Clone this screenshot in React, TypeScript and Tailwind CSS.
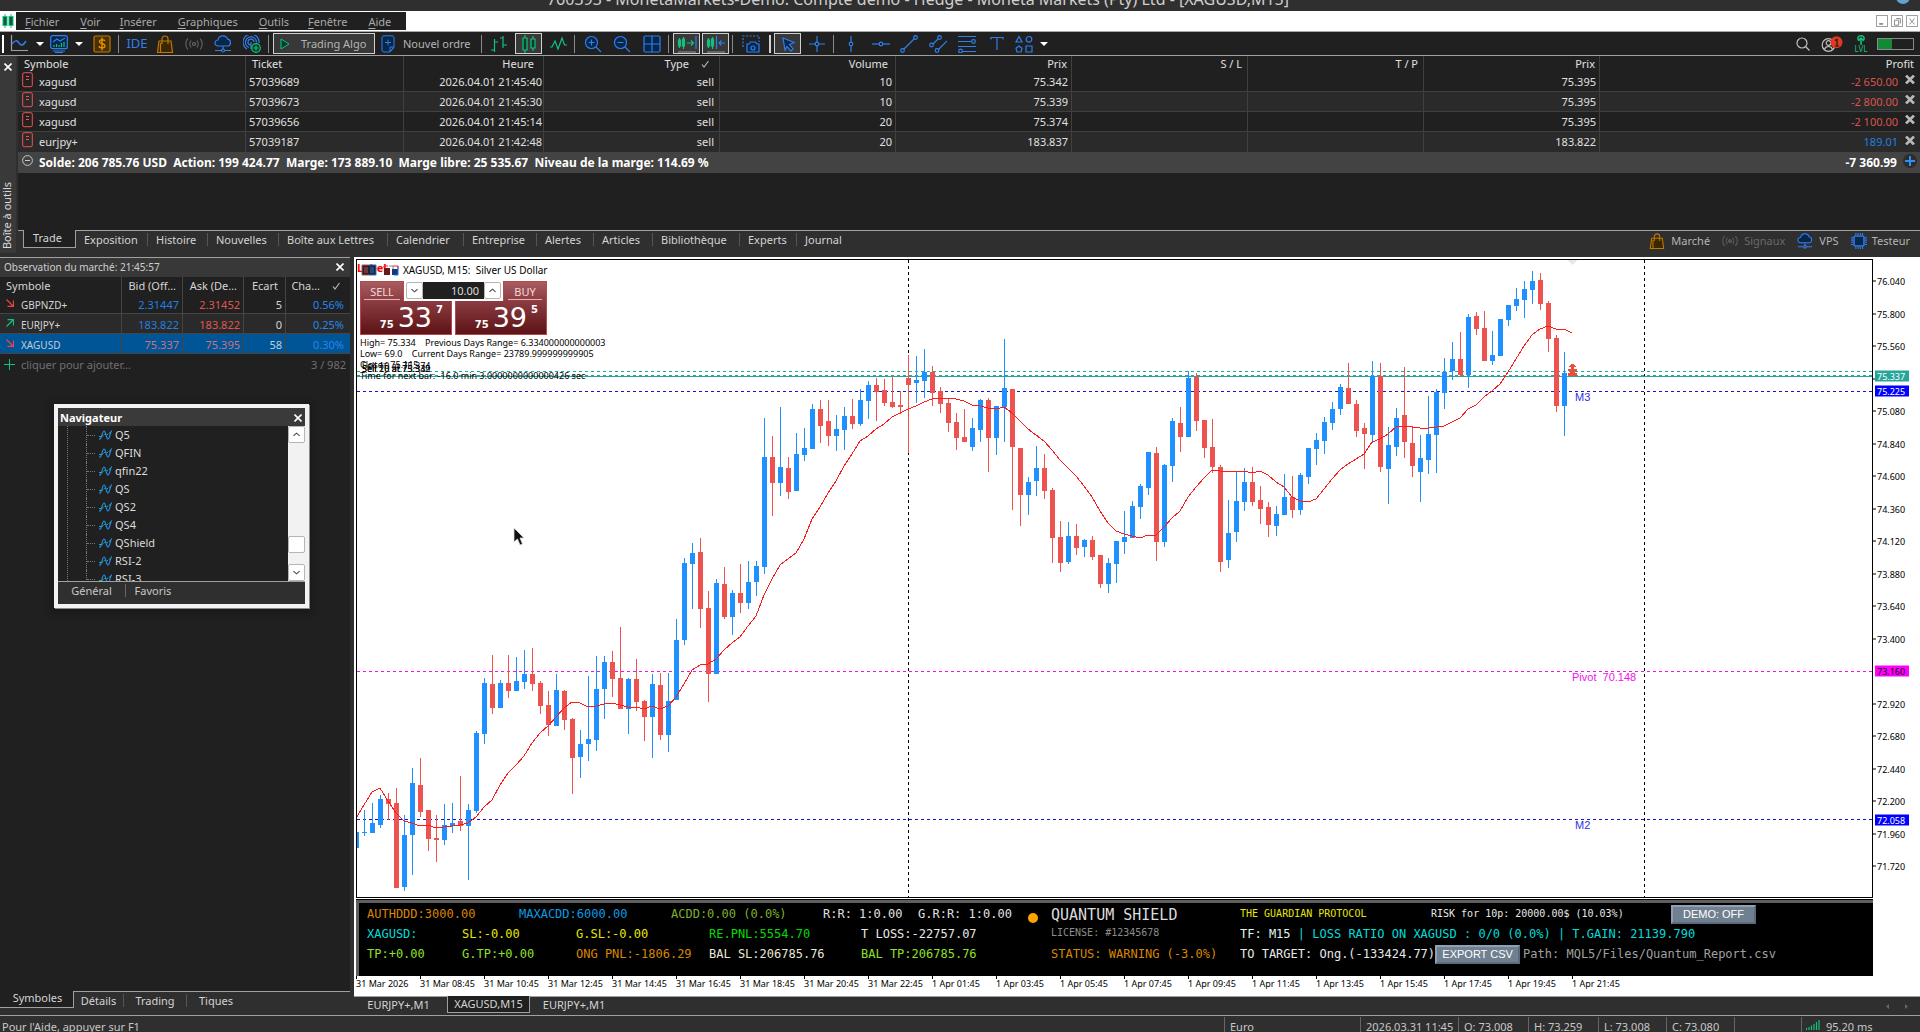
import React from "react";

const UI = "font-['Noto_Sans',sans-serif]";
const MONO = "font-['DejaVu_Sans_Mono',monospace]";

/* ------------------------------------------------------------------ */
/* Chart data                                                          */
/* ------------------------------------------------------------------ */

type Candle = [dir: "u" | "d", high: number, top: number, bottom: number, low: number];

const CANDLES: Candle[] = [
  ["u", 832, 832, 848, 848], ["u", 810, 832, 833, 836], ["u", 803, 823, 833, 833], ["u", 795, 799, 825, 828],
  ["d", 793, 799, 804, 820], ["d", 788, 803, 888, 888], ["u", 815, 835, 887, 891], ["u", 768, 783, 835, 875],
  ["d", 758, 785, 812, 817], ["d", 810, 810, 839, 851], ["d", 815, 838, 840, 862], ["u", 804, 825, 840, 845],
  ["u", 803, 823, 826, 833], ["d", 776, 821, 826, 831], ["u", 804, 810, 826, 880], ["u", 731, 733, 811, 813],
  ["u", 678, 683, 734, 744], ["d", 655, 684, 708, 714], ["u", 680, 683, 708, 708], ["d", 655, 683, 691, 698],
  ["u", 657, 681, 691, 691], ["u", 650, 674, 682, 689], ["d", 648, 674, 684, 691], ["d", 681, 683, 706, 714],
  ["d", 691, 705, 725, 736], ["u", 674, 690, 726, 726], ["d", 690, 691, 720, 730], ["d", 718, 719, 758, 794],
  ["u", 730, 744, 757, 778], ["u", 676, 739, 744, 761], ["u", 656, 689, 740, 751], ["u", 656, 662, 689, 719],
  ["d", 651, 662, 679, 697], ["d", 627, 678, 709, 709], ["u", 678, 679, 709, 734], ["d", 659, 679, 702, 711],
  ["d", 700, 701, 717, 741], ["u", 674, 684, 717, 758], ["d", 673, 685, 735, 740], ["u", 673, 701, 735, 752],
  ["u", 619, 640, 700, 700], ["u", 558, 563, 640, 645], ["u", 543, 553, 564, 609], ["d", 538, 552, 609, 628],
  ["d", 591, 608, 674, 702], ["u", 579, 583, 674, 674], ["d", 567, 584, 617, 619], ["u", 590, 593, 617, 635],
  ["d", 564, 593, 603, 613], ["u", 561, 582, 603, 609], ["u", 561, 566, 582, 596], ["u", 418, 457, 567, 574],
  ["d", 436, 457, 483, 516], ["u", 407, 467, 483, 496], ["d", 457, 468, 492, 499], ["u", 433, 454, 491, 491],
  ["u", 428, 448, 455, 461], ["u", 404, 409, 449, 449], ["d", 400, 409, 426, 443], ["d", 400, 421, 436, 446],
  ["u", 415, 429, 436, 451], ["u", 407, 416, 430, 450], ["d", 399, 416, 424, 429], ["u", 389, 400, 424, 426],
  ["u", 381, 385, 401, 419], ["d", 378, 385, 392, 421], ["d", 379, 390, 403, 406], ["d", 376, 402, 407, 408],
  ["d", 391, 405, 407, 414], ["d", 355, 378, 385, 453], ["u", 356, 380, 383, 403], ["u", 349, 372, 381, 398],
  ["d", 366, 372, 393, 406], ["d", 387, 391, 404, 413], ["d", 398, 403, 423, 432], ["d", 413, 422, 438, 450],
  ["d", 409, 437, 442, 442], ["u", 418, 428, 447, 451], ["u", 399, 400, 430, 442], ["d", 398, 400, 438, 472],
  ["u", 406, 406, 438, 455], ["u", 339, 388, 407, 442], ["d", 389, 389, 447, 510], ["d", 448, 448, 495, 526],
  ["u", 477, 482, 495, 515], ["u", 446, 468, 481, 496], ["d", 454, 468, 491, 499], ["d", 488, 490, 538, 563],
  ["d", 521, 537, 563, 572], ["u", 522, 536, 562, 564], ["d", 524, 536, 548, 555], ["u", 539, 540, 547, 557],
  ["d", 536, 540, 557, 560], ["d", 555, 555, 584, 588], ["u", 558, 563, 584, 593], ["u", 541, 541, 564, 583],
  ["u", 511, 537, 542, 554], ["u", 501, 506, 538, 538], ["u", 484, 486, 507, 519], ["u", 452, 452, 488, 495],
  ["d", 447, 453, 542, 561], ["u", 464, 465, 542, 547], ["u", 418, 421, 466, 482], ["d", 407, 423, 437, 452],
  ["u", 371, 378, 437, 437], ["d", 373, 377, 421, 431], ["d", 420, 420, 448, 458], ["d", 419, 447, 467, 473],
  ["d", 465, 467, 562, 572], ["u", 500, 533, 560, 568], ["u", 472, 501, 532, 542], ["u", 468, 482, 502, 511],
  ["d", 467, 482, 502, 506], ["d", 486, 500, 509, 524], ["d", 502, 507, 525, 537], ["u", 506, 514, 526, 536],
  ["u", 474, 497, 515, 515], ["d", 476, 497, 510, 518], ["u", 473, 475, 510, 515], ["u", 448, 448, 477, 484],
  ["u", 433, 440, 449, 465], ["u", 417, 422, 441, 454], ["u", 402, 409, 423, 430], ["u", 384, 387, 409, 415],
  ["d", 363, 388, 404, 404], ["d", 400, 404, 431, 437], ["d", 423, 428, 434, 469], ["u", 361, 376, 435, 443],
  ["d", 363, 376, 467, 472], ["u", 427, 445, 469, 504], ["u", 408, 418, 447, 456], ["d", 367, 415, 442, 458],
  ["d", 426, 443, 466, 477], ["u", 435, 458, 472, 502], ["u", 396, 434, 460, 474], ["u", 389, 392, 435, 473],
  ["u", 358, 372, 393, 409], ["u", 342, 359, 371, 380], ["d", 332, 359, 375, 377], ["u", 314, 317, 375, 388],
  ["d", 312, 316, 329, 335], ["d", 311, 328, 361, 361], ["u", 331, 355, 361, 365], ["u", 319, 319, 356, 356],
  ["u", 305, 305, 320, 326], ["u", 288, 299, 306, 311], ["u", 281, 289, 300, 318], ["u", 271, 281, 290, 304],
  ["d", 273, 280, 304, 310], ["d", 301, 303, 339, 352], ["d", 335, 338, 406, 412], ["u", 352, 373, 406, 436],
];

const AVERAGE = [
  818, 805, 792, 788, 801, 813, 821, 823, 826, 825, 828, 827, 826, 825, 823, 817, 807, 800, 785, 773, 765, 756, 743,
  733, 726, 717, 708, 702, 703, 707, 706, 704, 703, 705, 707, 707, 709, 706, 709, 706, 697, 684, 670, 665, 664, 659,
  650, 643, 637, 626, 616, 595, 579, 565, 559, 553, 539, 519, 507, 493, 481, 466, 454, 441, 436, 429, 424, 417, 413,
  409, 406, 402, 399, 398, 398, 399, 401, 405, 406, 408, 409, 407, 413, 421, 429, 435, 441, 450, 460, 468, 476, 486,
  497, 511, 523, 531, 534, 536, 538, 535, 535, 527, 518, 511, 497, 487, 478, 470, 471, 471, 471, 471, 473, 471, 475,
  482, 487, 497, 501, 502, 499, 489, 479, 470, 464, 459, 454, 442, 439, 434, 427, 426, 427, 428, 428, 427, 426, 422,
  418, 409, 405, 397, 391, 384, 372, 359, 346, 335, 329, 326, 329, 329, 333,
];

const X0 = 356;
const STEP = 8;
const VIEW = { x: 357, y: 260, w: 1515, h: 637 };
const pctX = (x: number) => `${((x - VIEW.x) / VIEW.w) * 100}%`;
const pctY = (y: number) => `${((y - VIEW.y) / VIEW.h) * 100}%`;
const priceY = (p: number) => 282 + (76.04 - p) * 135;

const TICKS = [
  76.04, 75.8, 75.56, 75.32, 75.08, 74.84, 74.6, 74.36, 74.12, 73.88, 73.64, 73.4, 73.16, 72.92, 72.68, 72.44, 72.2,
  71.96, 71.72,
];

const TIMES = [
  "31 Mar 2026", "31 Mar 08:45", "31 Mar 10:45", "31 Mar 12:45", "31 Mar 14:45", "31 Mar 16:45", "31 Mar 18:45",
  "31 Mar 20:45", "31 Mar 22:45", "1 Apr 01:45", "1 Apr 03:45", "1 Apr 05:45", "1 Apr 07:45", "1 Apr 09:45",
  "1 Apr 11:45", "1 Apr 13:45", "1 Apr 15:45", "1 Apr 17:45", "1 Apr 19:45", "1 Apr 21:45",
];

/* ------------------------------------------------------------------ */
/* Icons                                                               */
/* ------------------------------------------------------------------ */

const BLUE = "#2f7fed";
const NAVY = "#06264a";
const GREEN = "#10c27c";
const ORANGE = "#c27800";

function Ico({ className = "h-[18px] w-[18px]", box = "0 0 18 18", children }: { className?: string; box?: string; children: React.ReactNode }) {
  return (
    <svg className={`shrink-0 ${className}`} viewBox={box} fill="none" strokeWidth="1.2" aria-hidden="true">
      {children}
    </svg>
  );
}

const Bag = ({ className }: { className?: string }) => (
  <Ico className={className}>
    <path d="M3 6h12l1.500 11.500h-15z" fill="#3a2600" stroke={ORANGE} />
    <path d="M6 9V4a3 3 0 0 1 6 0v5M4.500 17V8" stroke={ORANGE} />
  </Ico>
);
const Signal = ({ className }: { className?: string }) => (
  <Ico className={className}>
    <circle cx="9" cy="9" r="1.500" stroke="#6a6a6a" />
    <path d="M6.200 5.500a5 5 0 0 0 0 7M11.800 5.500a5 5 0 0 1 0 7M3 3.500a8 8 0 0 0 0 11M15 3.500a8 8 0 0 1 0 11" stroke="#5c5c5c" />
  </Ico>
);
const Cloud = ({ className }: { className?: string }) => (
  <Ico className={className}>
    <path d="M4 11a3 3 0 0 1 0-6 5 5 0 0 1 9.600-.8A3.500 3.500 0 0 1 14 11z" fill={NAVY} stroke={BLUE} />
    <path d="M9 11v4M1 15.500h6M11 15.500h6" stroke={BLUE} />
    <circle cx="9" cy="15.500" r="1.500" stroke={BLUE} />
  </Ico>
);
const Chip = ({ className }: { className?: string }) => (
  <Ico className={className}>
    <rect x="3.500" y="3.500" width="11" height="11" rx="1" fill={NAVY} stroke={BLUE} strokeWidth="1.500" />
    <path d="M5.500 0v3M8 0v3M10.500 0v3M13 0v3M5.500 15v3M8 15v3M10.500 15v3M13 15v3M0 5.500h3M0 8h3M0 10.500h3M0 13h3M15 5.500h3M15 8h3M15 10.500h3M15 13h3" stroke={BLUE} />
  </Ico>
);
const Close = ({ className = "h-2 w-2" }: { className?: string }) => (
  <svg className={className} viewBox="0 0 8 8" stroke="#fff" strokeWidth="1.600" aria-hidden="true">
    <path d="M.5.5l7 7M7.500.5l-7 7" />
  </svg>
);
const Check = () => (
  <svg className="h-2 w-2" viewBox="0 0 8 8" fill="none" stroke="#b5b5b5" strokeWidth="1.200" aria-hidden="true">
    <path d="M1 4.500l2 2.500L7.500 1" />
  </svg>
);
const Chevron = ({ up = false }: { up?: boolean }) => (
  <svg className="h-[7px] w-[7px]" viewBox="0 0 8 8" fill="none" stroke="#444" strokeWidth="1.200" aria-hidden="true">
    <path d={up ? "M.5 5.500L4 2.500l3.500 3" : "M.5 2.500L4 5.500l3.500-3"} />
  </svg>
);
const Ring = ({ x, y }: { x: number; y: number }) => <circle cx={x} cy={y} r="1.800" fill="#1f1f1f" stroke={BLUE} />;

/* ------------------------------------------------------------------ */
/* Title, menu and toolbar                                             */
/* ------------------------------------------------------------------ */

const MENUS: [string, string][] = [
  ["Fichier", "ml-[9px]"], ["Voir", "ml-[21px]"], ["Insérer", "ml-[19px]"], ["Graphiques", "ml-[21px]"],
  ["Outils", "ml-[21px]"], ["Fenêtre", "ml-[19px]"], ["Aide", "ml-[21px]"],
];

function TopBars() {
  return (
    <>
      <header className="relative flex h-[11px] shrink-0 items-end justify-center overflow-hidden bg-[#2f2f2f]">
        <h1 className="pr-[84px] pb-1 text-[16px] leading-[16px] whitespace-pre text-[#cfcfcf]">
          760393 - MonetaMarkets-Demo: Compte demo - Hedge - Moneta Markets (Pty) Ltd - [XAGUSD,M15]
        </h1>
        <span className="absolute -top-2.5 right-2.5 h-3.5 w-3.5 rounded-full bg-[#5fa3d0]" />
      </header>
      <div className="flex h-[21px] shrink-0 items-center border-b border-[#a8a8a8] bg-white">
        <svg className="mr-0.5 ml-0.5 h-3.5 w-3" viewBox="0 0 12 14" aria-hidden="true">
          <path d="M3 0v14M9 0v14" stroke={GREEN} />
          <rect x="1" y="2.500" width="4" height="9" fill="#0c5c3c" stroke={GREEN} />
          <rect x="7" y="2.500" width="4" height="9" fill="#0c5c3c" stroke={GREEN} />
        </svg>
        <nav className="flex h-[18px] w-[390px] items-center bg-[#202020]">
          {MENUS.map(([m, gap]) => (
            <button key={m} className={`${gap} pt-0.5 leading-[14px] text-[#a9a9a9]`}>
              <span className="underline underline-offset-2">{m[0]}</span>
              {m.slice(1)}
            </button>
          ))}
        </nav>
        <div className="ml-auto flex gap-[3px] pr-0.5">
          {["M3 9h4v1H3z", "M3 5h5v6H3zM5 3h5v6", "M3 3l6 7M9 3l-6 7"].map((d, i) => (
            <button key={d} aria-label={["Réduire", "Restaurer", "Fermer"][i]} className="h-3 w-3 border border-[#a0a0a0]">
              <svg viewBox="0 0 12 13" fill="none" stroke="#8c8c8c" strokeWidth="1.200" aria-hidden="true">
                <path d={d} />
              </svg>
            </button>
          ))}
        </div>
      </div>
    </>
  );
}

const Sep = ({ className }: { className: string }) => <span className={`h-[18px] w-px shrink-0 bg-[#8a8a8a] ${className}`} />;
const Caret = ({ className }: { className: string }) => (
  <svg className={`h-1 w-2 shrink-0 ${className}`} viewBox="0 0 8 4" aria-hidden="true">
    <path d="M0 0h8L4 4z" fill="#fff" />
  </svg>
);
function Tool({ label, className, on = false, children }: { label: string; className: string; on?: boolean; children: React.ReactNode }) {
  return (
    <button
      aria-label={label}
      aria-pressed={on}
      className={`flex shrink-0 items-center justify-center ${on ? "h-[21px] border border-[#cfcfcf] bg-[#383838]" : "h-[18px]"} ${className}`}
    >
      {children}
    </button>
  );
}

function Toolbar() {
  return (
    <div className="flex h-6 shrink-0 items-center border-b border-[#a0a0a0] bg-[#202020] text-[#b4b4b4]">
      <span className="ml-0.5 h-[18px] w-0.5 shrink-0 bg-white" />
      <Tool label="Type de graphique" className="ml-[6px] w-[18px]">
        <Ico>
          <path d="M1.500 0v15.500H18" stroke="#a0a0a0" />
          <path d="M2 9c3-4 5-4 7-1s4 3 7-2" stroke={BLUE} strokeWidth="1.500" />
        </Ico>
      </Tool>
      <Caret className="ml-2" />
      <Tool label="Indicateurs" className="ml-[5px] w-[19px]">
        <Ico>
          <rect x=".7" y=".7" width="16.600" height="13" rx="2" fill={NAVY} stroke={BLUE} />
          <path d="M3 16h12M5 17.700h8" stroke={BLUE} />
          <path d="M3 7l4-3 3 2 5-3" stroke={BLUE} />
          <path d="M4 12v-2M6.500 12V9M9 12v-2M11.500 12V8M14 12V7" stroke={GREEN} />
        </Ico>
      </Tool>
      <Caret className="ml-[7px]" />
      <Tool label="Symbole" className="ml-[10px] w-[18px]">
        <Ico>
          <rect x="1" y="1" width="16" height="16" rx="1.500" fill="#4a3000" stroke={ORANGE} />
          <path d="M12 6c-.5-1.500-5.500-2-5.500.7 0 2.500 5.500 1.500 5.500 4.200 0 2.800-5.500 2.300-6 .4M9 2.500v13" stroke="#e09000" strokeWidth="1.400" />
        </Ico>
      </Tool>
      <Sep className="ml-[7px]" />
      <Tool label="IDE" className="ml-[8px] w-5"><span className="text-[13px] leading-none text-[#2f7fed]">IDE</span></Tool>
      <Tool label="Marché" className="ml-[9px] w-[18px]"><Bag /></Tool>
      <Tool label="Signaux" className="ml-[11px] w-[18px]"><Signal /></Tool>
      <Tool label="VPS" className="ml-[11px] w-[18px]"><Cloud /></Tool>
      <Tool label="Connexion" className="ml-[11px] w-[18px]">
        <Ico>
          <path d="M4 14A8 8 0 1 1 16 8M6 12.500a5.500 5.500 0 1 1 7.500-5M7.500 10a3 3 0 1 1 3.500-3M8 7v7" stroke={BLUE} />
          <circle cx="13" cy="13" r="4.300" fill="#0b3a28" stroke={GREEN} />
          <path d="M10.500 13h5M13 10.500v5" stroke={GREEN} />
        </Ico>
      </Tool>
      <Sep className="ml-[7px]" />
      <button className="ml-1 flex h-[21px] w-[102px] shrink-0 items-center border border-[#cfcfcf] bg-[#383838] pl-[6px]">
        <svg className="mr-[11px] h-3 w-2.5" viewBox="0 0 10 12" aria-hidden="true">
          <path d="M1 1l8 5-8 5z" fill="#0b3a28" stroke={GREEN} />
        </svg>
        Trading Algo
      </button>
      <button className="ml-[6px] flex w-[90px] shrink-0 items-center gap-2 whitespace-nowrap">
        <svg className="h-[18px] w-3.5 shrink-0" viewBox="0 0 14 18" fill="none" stroke={BLUE} aria-hidden="true">
          <path d="M3 .8h8a2 2 0 0 1 2 2V12l-4 5H3a2 2 0 0 1-2-2V2.800a2 2 0 0 1 2-2zM13 12l-4 5v-5z" fill={NAVY} />
          <path d="M7 4.500v6M4 7.500h6" />
        </svg>
        Nouvel ordre
      </button>
      <Sep className="ml-[10px]" />
      <Tool label="Barres" className="ml-2 w-[18px]">
        <Ico><path d="M4.500 4v13M1 15h3.500M4.500 7H8M13 1v12M10 3h3M13 10h4" stroke={GREEN} /></Ico>
      </Tool>
      <Tool on label="Chandeliers" className="ml-[7px] w-[27px]">
        <Ico>
          <path d="M5 0v3M5 15v3M13 1v3M13 13v3" stroke={GREEN} />
          <path d="M3 3h4v12H3zM11 4h4v9h-4z" fill="#0b3a28" stroke={GREEN} />
        </Ico>
      </Tool>
      <Tool label="Ligne" className="ml-[7px] w-[18px]">
        <Ico><path d="M1 12h2l3-6 3 8 4-11 2.500 7H18" stroke={GREEN} /></Ico>
      </Tool>
      <Sep className="ml-[7px]" />
      {["Zoom avant", "Zoom arrière"].map((l, i) => (
        <Tool key={l} label={l} className={i ? "ml-[11px] w-[18px]" : "ml-[9px] w-[18px]"}>
          <Ico>
            <circle cx="7.500" cy="7.500" r="6" fill={NAVY} stroke={BLUE} />
            <path d={i ? "M4.500 7.500h6M12 12l5 5" : "M4.500 7.500h6M7.500 4.500v6M12 12l5 5"} stroke={BLUE} />
          </Ico>
        </Tool>
      ))}
      <Tool label="Mosaïque" className="ml-3 w-[18px]">
        <Ico>
          <rect x="1" y="1" width="16" height="16" rx="1.500" fill={NAVY} stroke={BLUE} />
          <path d="M9 1v16M1 9h16" stroke={BLUE} />
        </Ico>
      </Tool>
      <Sep className="ml-[7px]" />
      <Tool on label="Défilement automatique" className="ml-1 w-[27px]">
        <Ico className="h-[18px] w-5" box="0 0 20 18">
          <path d="M2.500 3v10M6.500 2v12M1.500 5h2v6h-2zM5.500 4h2v7h-2zM10 8h6M14 5.500L16.500 8 14 10.500" stroke={GREEN} />
          <path d="M19 1v13" stroke={BLUE} />
          <path d="M1 17h18" stroke="#8a8a8a" />
        </Ico>
      </Tool>
      <Tool on label="Décalage du graphique" className="ml-0.5 w-[27px]">
        <Ico className="h-[18px] w-5" box="0 0 20 18">
          <path d="M2.500 3v10M6.500 2v12M1.500 5h2v6h-2zM5.500 4h2v7h-2z" stroke={GREEN} />
          <path d="M10.500 1v13M13 8h6M15.500 5.500L13 8l2.500 2.500" stroke={BLUE} />
          <path d="M1 17h18" stroke="#8a8a8a" />
        </Ico>
      </Tool>
      <Sep className="ml-[3px]" />
      <Tool label="Capture d'écran" className="ml-[9px] w-[18px]">
        <Ico>
          <path d="M1 12V1h16v6" stroke={BLUE} strokeDasharray="2 1.500" />
          <path d="M5 9h2l1.500-2h5L15 9h2v8H5z" fill={NAVY} stroke={BLUE} />
          <circle cx="11" cy="13" r="2" stroke={BLUE} />
        </Ico>
      </Tool>
      <span className="ml-[9px] h-[18px] w-0.5 shrink-0 bg-[#d0d0d0]" />
      <Tool on label="Curseur" className="ml-[3px] w-[27px]">
        <Ico><path d="M4 3l11 4.500-4.500 2L14 14l-2 2-4-4.500L6 15z" fill={NAVY} stroke={BLUE} /></Ico>
      </Tool>
      <Tool label="Réticule" className="ml-[7px] w-[18px]">
        <Ico><path d="M9 1v16M1 9h16" stroke={BLUE} /><Ring x={9} y={9} /></Ico>
      </Tool>
      <Sep className="ml-[7px]" />
      <Tool label="Ligne verticale" className="ml-2 w-[18px]">
        <Ico><path d="M9 1v16" stroke={BLUE} /><Ring x={9} y={9} /></Ico>
      </Tool>
      <Tool label="Ligne horizontale" className="ml-3 w-[18px]">
        <Ico><path d="M0 9h18" stroke={BLUE} /><Ring x={9} y={9} /></Ico>
      </Tool>
      <Tool label="Ligne de tendance" className="ml-[10px] w-[18px]">
        <Ico><path d="M2 16L16 2" stroke={BLUE} /><Ring x={2.500} y={15.500} /><Ring x={15.500} y={2.500} /></Ico>
      </Tool>
      <Tool label="Canal" className="ml-[11px] w-[18px]">
        <Ico><path d="M2 11l8-8M8 16l10-10" stroke={BLUE} /><Ring x={2.500} y={10} /><Ring x={10.500} y={2.500} /><Ring x={8} y={15.500} /></Ico>
      </Tool>
      <Tool label="Fibonacci" className="ml-[11px] w-[18px]">
        <Ico><path d="M0 1.500h18M0 6.500h14M0 11.500h18M4 16.500h14" stroke={BLUE} /><Ring x={15.500} y={6.500} /><Ring x={2.500} y={16} /></Ico>
      </Tool>
      <Tool label="Texte" className="ml-[12px] w-[18px]">
        <Ico><path d="M3 4.500V2.500h12v2M9 2.500V15" stroke={BLUE} /></Ico>
      </Tool>
      <Tool label="Formes" className="ml-[9px] w-[18px]">
        <Ico>
          <path d="M4 1.500L7 7H1zM11 11h6v6h-6zM4 11l3 2.300L6 17H2L1 13.300z" stroke={BLUE} />
          <circle cx="14" cy="4.300" r="2.800" stroke={BLUE} />
        </Ico>
      </Tool>
      <Caret className="ml-[7px]" />
      <div className="ml-auto flex items-center pr-[6px]">
        <Tool label="Rechercher" className="w-3.5">
          <Ico className="h-3.5 w-3.5" box="0 0 14 14"><circle cx="6" cy="6" r="5" stroke="#c0c0c0" /><path d="M9.500 9.500l4 4" stroke="#c0c0c0" /></Ico>
        </Tool>
        <Tool label="Compte" className="ml-[11px] w-[22px]">
          <Ico className="h-4 w-[22px]" box="0 0 22 16">
            <circle cx="7.500" cy="9" r="6.300" stroke="#c0c0c0" />
            <circle cx="7.500" cy="7" r="2.300" stroke="#c0c0c0" />
            <path d="M3.500 13.500c1-4 7-4 8 0" stroke="#c0c0c0" />
            <circle cx="15.500" cy="6.300" r="6" fill="#e03a1e" />
            <path d="M14 4.500l2-1.200V10M14 10h4" stroke="#1a1a1a" />
          </Ico>
        </Tool>
        <span className="ml-[10px] flex w-4 flex-col items-center text-[8px] leading-[8px] text-[#10c27c]">
          <svg className="h-2.5 w-2" viewBox="0 0 8 10" fill="none" stroke={GREEN} strokeWidth="1.500" aria-hidden="true">
            <path d="M2.500 6C-.5 4 1 .7 4 .7S8.500 4 5.500 6M4 10V3.500M2 5l2-2 2 2" />
          </svg>
          LVL
        </span>
        <span className="ml-2 h-3 w-[37px] border border-[#8a8a8a]"><span className="block h-full w-3.5 bg-[#128a35]" /></span>
      </div>
    </div>
  );
}

/* ------------------------------------------------------------------ */
/* Toolbox                                                             */
/* ------------------------------------------------------------------ */

const TRADES = [
  ["xagusd", "57039689", "2026.04.01 21:45:40", "10", "75.342", "75.395", "-2 650.00"],
  ["xagusd", "57039673", "2026.04.01 21:45:30", "10", "75.339", "75.395", "-2 800.00"],
  ["xagusd", "57039656", "2026.04.01 21:45:14", "20", "75.374", "75.395", "-2 100.00"],
  ["eurjpy+", "57039187", "2026.04.01 21:42:48", "20", "183.837", "183.822", "189.01"],
];

const TOOL_TABS: [string, string][] = [
  ["Exposition", "w-[72px]"], ["Histoire", "w-[60px]"], ["Nouvelles", "w-[71px]"], ["Boîte aux Lettres", "w-[109px]"],
  ["Calendrier", "w-[76px]"], ["Entreprise", "w-[73px]"], ["Alertes", "w-[57px]"], ["Articles", "w-[59px]"],
  ["Bibliothèque", "w-[87px]"], ["Experts", "w-[57px]"], ["Journal", "w-[60px]"],
];

function Toolbox() {
  const line = "border-r border-[#404040]";
  return (
    <section className="flex h-[201px] shrink-0 bg-[#2f2f2f]">
      <div className="flex h-[197px] w-4 shrink-0 flex-col items-center justify-between bg-[#393939] pt-[7px] pb-1 text-[#dcdcdc]">
        <button aria-label="Fermer"><Close /></button>
        <span className="mr-[3px] rotate-180 leading-[14px] whitespace-nowrap [writing-mode:vertical-rl]">Boîte à outils</span>
      </div>
      <div className="ml-0.5 flex min-w-0 flex-1 flex-col">
        <div className="flex h-[175px] flex-col border-b border-[#a0a0a0] bg-[#202020]">
          <table className="w-full table-fixed border-separate border-spacing-0 text-right text-[#e0e0e0]">
            <colgroup>
              <col className="w-[228px]" /><col className="w-[158px]" /><col className="w-[140px]" />
              <col className="w-[176px]" /><col className="w-[176px]" /><col className="w-[176px]" />
              <col className="w-[176px]" /><col className="w-[176px]" /><col className="w-[176px]" /><col />
            </colgroup>
            <thead>
              <tr className="leading-[16px] *:font-normal">
                <th className={`pl-[6px] text-left ${line}`}>Symbole</th>
                <th className={`pl-[6px] text-left ${line}`}>Ticket</th>
                <th className={`pr-[9px] ${line}`}>Heure</th>
                <th className={`pr-[10px] ${line}`}><span className="inline-flex items-center gap-3">Type<Check /></span></th>
                <th className={`pr-[7px] ${line}`}>Volume</th>
                <th className={`pr-1 ${line}`}>Prix</th>
                <th className={`pr-[5px] ${line}`}>S / L</th>
                <th className={`pr-[5px] ${line}`}>T / P</th>
                <th className={`pr-1 ${line}`}>Prix</th>
                <th className="pr-[6px]">Profit</th>
              </tr>
            </thead>
            <tbody>
              {TRADES.map((t, i) => (
                <tr key={t[1]} className={`leading-[16px] ${i % 2 ? "bg-[#2a2a2a]" : "bg-[#202020]"} ${i < 3 ? "*:border-b *:border-b-[#404040]" : ""} *:h-5 *:py-0`}>
                  <td className={`pl-1 text-left ${line}`}>
                    <span className="flex items-center gap-[6px]">
                      <svg className="-mt-1 h-4 w-[11px]" viewBox="0 0 11 16" fill="none" stroke="#ef5350" aria-hidden="true">
                        <rect x=".7" y=".7" width="9.600" height="14" rx="1.500" /><path d="M4 4.500h3M4 7.500h3" />
                      </svg>
                      {t[0]}
                    </span>
                  </td>
                  <td className={`pl-[3px] text-left ${line}`}>{t[1]}</td>
                  <td className={`pr-px ${line}`}>{t[2]}</td>
                  <td className={`pr-[5px] ${line}`}>sell</td>
                  <td className={`pr-[3px] ${line}`}>{t[3]}</td>
                  <td className={`pr-[3px] ${line}`}>{t[4]}</td>
                  <td className={line} />
                  <td className={line} />
                  <td className={`pr-[3px] ${line}`}>{t[5]}</td>
                  <td className="pr-[5px]">
                    <span className="flex items-center justify-end gap-[7px]">
                      <span className={t[6][0] === "-" ? "text-[#d9534f]" : "text-[#2080e0]"}>{t[6]}</span>
                      <button aria-label={`Clôturer ${t[1]}`}>
                        <svg className="-mt-1 h-[9px] w-2.5" viewBox="0 0 8 8" stroke="#b9b9b9" strokeWidth="2.400" aria-hidden="true"><path d="M.5.5l7 7M7.500.5l-7 7" /></svg>
                      </button>
                    </span>
                  </td>
                </tr>
              ))}
            </tbody>
          </table>
          <div className="flex h-[21px] items-center justify-between bg-[#434343] pr-[3px] pl-1 font-bold text-white">
            <span className="flex items-center gap-[6px] text-[12px] whitespace-pre">
              <svg className="-mt-1 h-[11px] w-[11px]" viewBox="0 0 11 11" fill="none" stroke="#c8c8c8" aria-hidden="true"><circle cx="5.500" cy="5.500" r="4.900" /><path d="M3 5.500h5" /></svg>
              {"Solde: 206 785.76 USD  Action: 199 424.77  Marge: 173 889.10  Marge libre: 25 535.67  Niveau de la marge: 114.69 %"}
            </span>
            <span className="flex items-center gap-[6px] text-[12px]">
              -7 360.99
              <button aria-label="Ajouter" className="-mt-1 rounded-full bg-[#2c2c2c]">
                <svg className="h-3.5 w-3.5" viewBox="0 0 14 14" stroke="#2f8ff5" strokeWidth="2" aria-hidden="true"><path d="M7 2v10M2 7h10" /></svg>
              </button>
            </span>
          </div>
        </div>
        <div className="flex h-[22px] items-start justify-between text-[#d4d4d4]">
          <div className="flex">
            <button className="-mt-px ml-[5px] h-[18px] w-[53px] border border-t-0 border-[#a0a0a0] bg-[#202020] pr-1 pb-0.5">Trade</button>
            {TOOL_TABS.map(([t, w]) => (
              <button key={t} className={`mt-0.5 h-[13px] whitespace-nowrap pl-[8px] text-left leading-[12px] ${w} ${t === "Journal" ? "" : "border-r border-[#555]"}`}>
                {t}
              </button>
            ))}
          </div>
          <div className="mt-[2px] flex gap-3 pr-[10px] text-[#b4b4b4]">
            <button className="flex items-center gap-[6px]"><Bag className="h-4 w-4" />Marché</button>
            <button className="flex items-center gap-[6px] text-[#6a6a6a]"><Signal className="h-4 w-4" />Signaux</button>
            <button className="flex items-center gap-[6px]"><Cloud className="h-4 w-4" />VPS</button>
            <button className="flex items-center gap-[5px]"><Chip className="h-4 w-4" />Testeur</button>
          </div>
        </div>
      </div>
    </section>
  );
}

/* ------------------------------------------------------------------ */
/* Market watch and navigator                                          */
/* ------------------------------------------------------------------ */

const QUOTES = [
  { up: false, s: "GBPNZD+", bid: "2.31447", ask: "2.31452", e: "5", c: "0.56%" },
  { up: true, s: "EURJPY+", bid: "183.822", ask: "183.822", e: "0", c: "0.25%" },
  { up: false, s: "XAGUSD", bid: "75.337", ask: "75.395", e: "58", c: "0.30%" },
];

function MarketWatch() {
  const line = "border-r border-[#454545]";
  return (
    <aside className="relative flex w-[350px] shrink-0 flex-col border-t border-[#a0a0a0] bg-[#202020] text-[#d4d4d4]">
      <div className="flex h-[19px] items-center justify-between bg-[#383838] pr-[6px] pb-px pl-1">
        <h2 className="text-[10px] text-[#cfcfcf]">Observation du marché: 21:45:57</h2>
        <button aria-label="Fermer"><Close /></button>
      </div>
      <table className="w-full table-fixed border-separate border-spacing-0 text-right">
        <colgroup><col className="w-[122px]" /><col className="w-[61px]" /><col className="w-[61px]" /><col className="w-[42px]" /><col /></colgroup>
        <thead>
          <tr className="h-[17px] leading-[17px] *:font-normal">
            <th className={`pl-[6px] text-left ${line}`}>Symbole</th>
            <th className={`pr-[6px] whitespace-nowrap ${line}`}>Bid (Off…</th>
            <th className={`pr-[6px] whitespace-nowrap ${line}`}>Ask (De…</th>
            <th className={`pr-[7px] ${line}`}>Ecart</th>
            <th className="pr-[10px]"><span className="inline-flex items-center gap-3">Cha…<Check /></span></th>
          </tr>
        </thead>
        <tbody>
          {QUOTES.map((q, i) => {
            const sel = i === 2;
            return (
              <tr key={q.s} className={`leading-[16px] *:h-5 *:border-b *:border-b-[#454545] *:pt-[3px] ${sel ? "bg-[#005596] text-[#c0cdd8]" : i ? "bg-[#2a2a2a]" : ""}`}>
                <td className={`pl-[6px] text-left ${line}`}>
                  <span className="flex items-center gap-[7px] text-[10px]">
                    <svg className="-mt-1 h-2 w-2" viewBox="0 0 8 8" fill="none" stroke={q.up ? GREEN : "#ef4444"} strokeWidth="1.200" aria-hidden="true">
                      <path d={q.up ? "M.5 7.500l7-7M1.500.6h6v6" : "M.5.5l7 7M1.500 7.400h6v-6"} />
                    </svg>
                    {q.s}
                  </span>
                </td>
                <td className={`pr-[3px] ${line} ${sel ? "text-[#d27078]" : "text-[#2080e0]"}`}>{q.bid}</td>
                <td className={`pr-[3px] ${line} ${sel ? "text-[#d27078]" : "text-[#e05550]"}`}>{q.ask}</td>
                <td className={`pr-[3px] ${line}`}>{q.e}</td>
                <td className="pr-[6px] text-[#2388ee]">{q.c}</td>
              </tr>
            );
          })}
        </tbody>
      </table>
      <div className="flex h-[22px] items-center justify-between pr-1 pl-1 text-[#707070]">
        <button className="flex items-center gap-[6px]">
          <svg className="-mt-0.5 h-[11px] w-[11px]" viewBox="0 0 11 11" stroke={GREEN} aria-hidden="true"><path d="M5.500 0v11M0 5.500h11" /></svg>
          cliquer pour ajouter...
        </button>
        <span>3 / 982</span>
      </div>
      <Navigator />
      <div className="mt-auto flex h-6 border-t border-[#a0a0a0] bg-[#2f2f2f] text-[#d4d4d4]">
        <button className="-mt-px h-[17px] w-[74px] border-r border-b border-[#a0a0a0] bg-[#202020] pb-0.5 pl-0.5">Symboles</button>
        <button className="mt-0.5 h-[13px] w-[50px] border-r border-[#555] leading-[12px]">Détails</button>
        <button className="mt-0.5 h-[13px] w-[63px] border-r border-[#555] leading-[12px]">Trading</button>
        <button className="mt-0.5 h-[13px] w-[58px] leading-[12px]">Tiques</button>
      </div>
    </aside>
  );
}

const NAV_ITEMS = ["Q5", "QFIN", "qfin22", "QS", "QS2", "QS4", "QShield", "RSI-2", "RSI-3"];

function Navigator() {
  const knob = "flex h-[17px] w-[17px] items-center justify-center rounded-[2px] border border-[#b5b5b5] bg-white";
  return (
    <section className="absolute top-[146px] left-[54px] flex h-[204px] w-[255px] flex-col border-4 border-[#f2f2f2] bg-[#2f2f2f] shadow-[1px_1px_0_#8a8a8a,0_2px_6px_3px_#181818]">
      <div className="flex h-[18px] shrink-0 items-center justify-between bg-[#3a3a3a] pt-px pr-[3px] pl-0.5 font-bold text-white">
        <h2>Navigateur</h2>
        <button aria-label="Fermer"><Close /></button>
      </div>
      <div className="flex min-h-0 flex-1 bg-[#202020]">
        <ul className="ml-[9px] flex-1 overflow-hidden border-l border-dotted border-[#777]">
          {NAV_ITEMS.map((n) => (
            <li key={n} className="ml-[18px] flex h-[18px] items-center border-l border-dotted border-[#777] text-[#dcdcdc]">
              <span className="mr-1 w-2 border-t border-dotted border-[#777]" />
              <svg className="mr-[3px] h-3 w-[13px]" viewBox="0 0 13 12" fill="none" aria-hidden="true">
                <path d="M0 10C3 11 3 2 5 2s2 8 4 8 2-8 4-8.500" stroke={BLUE} strokeWidth="1.200" />
                <path d="M0 7.500h3L6 5l2 1 2-2h3" stroke={GREEN} strokeWidth="1" strokeDasharray="2 1" />
              </svg>
              {n}
            </li>
          ))}
        </ul>
        <div className="flex w-[17px] flex-col bg-[#f2f2f2]">
          <button aria-label="Défiler vers le haut" className={knob}><Chevron up /></button>
          <span className={`mt-auto mb-[11px] ${knob}`} />
          <button aria-label="Défiler vers le bas" className={knob}><Chevron /></button>
        </div>
      </div>
      <div className="flex h-[23px] shrink-0 items-start border-t border-[#a0a0a0] pt-0.5 text-[#c8c8c8]">
        <button className="h-[13px] w-[68px] border-r border-[#666] leading-[12px]">Général</button>
        <button className="h-[13px] w-[54px] leading-[12px]">Favoris</button>
      </div>
    </section>
  );
}

/* ------------------------------------------------------------------ */
/* Chart window                                                        */
/* ------------------------------------------------------------------ */

function Plot() {
  return (
    <svg
      className="block h-full w-full"
      viewBox={`${VIEW.x} ${VIEW.y} ${VIEW.w} ${VIEW.h}`}
      preserveAspectRatio="none"
      shapeRendering="crispEdges"
      role="img"
      aria-label="XAGUSD, M15"
    >
      <g strokeWidth="1" strokeDasharray="3 3">
        <path d="M357 371.500H1873M357 375.500H1873" stroke="#26a69a" />
        <path d="M357 391.500H1873M357 819.500H1873" stroke="#1414d8" />
        <path d="M357 671.500H1873" stroke="#f012f0" />
        <path d="M908.500 260V897M1644.500 260V897" stroke="#000" />
      </g>
      <path d="M357 376.500H1873" stroke="#26a69a" />
      {CANDLES.map(([dir, high, top, bottom, low], i) => {
        const x = X0 + i * STEP;
        return (
          <g key={i} fill={dir === "u" ? "#1e90ff" : "#ef5350"}>
            <rect x={x} y={high} width="1" height={low - high} />
            <rect x={x - 2} y={top} width="5" height={bottom - top} />
          </g>
        );
      })}
      <polyline points={AVERAGE.map((y, i) => `${X0 + i * STEP},${y}`).join(" ")} fill="none" stroke="#ff1a1a" />
      <path d="M1572.500 363.500l4 3.500h-2.500v2h3v1.500h-2v2l2 .5v3h-9v-3l2-.5v-2h-2v-1.500h3v-2h-2.500z" fill="#e8503a" />
      <path d="M1568 260h9l-4.500 5z" fill="#ece4ee" />
    </svg>
  );
}

function QuickTrade() {
  const half = "flex h-[34px] items-end justify-end gap-1 border border-t-0 border-[#b4484c] bg-linear-to-b from-[#8c3c42] to-[#5c1216] pr-2 pb-1 text-white";
  const head = "flex h-5 w-11 items-center justify-center border border-b-0 border-[#b4484c] bg-linear-to-b from-[#a85c60] to-[#8c3c42] pt-0.5 text-[#f4d8d8]";
  const knob = "flex h-full w-[17px] items-center justify-center rounded-[2px] border border-[#b5b5b5] bg-white";
  return (
    <div className="ml-[3px] w-[187px]">
      <div className="flex items-start justify-between">
        <button className={head}><span className="border-b border-[#e8b0b0] px-[6px]">SELL</span></button>
        <div className="mt-px flex h-[17px] items-center">
          <button aria-label="Diminuer le volume" className={knob}><Chevron /></button>
          <input aria-label="Volume" defaultValue="10.00" className="h-full w-[61px] bg-[#202020] pr-[5px] text-right text-[11px] text-[#dcdcdc]" />
          <button aria-label="Augmenter le volume" className={knob}><Chevron up /></button>
        </div>
        <button className={head}><span className="border-b border-[#e8b0b0] px-[6px]">BUY</span></button>
      </div>
      <div className="flex justify-between font-['DejaVu_Sans',sans-serif]">
        {[["75", "33", "7"], ["75", "39", "5"]].map(([a, b, c]) => (
          <button key={b} className={`${half} w-[92px]`} aria-label={`${a}.${b}${c}`}>
            <span className="text-[10px] leading-none font-bold">{a}</span>
            <span className="text-[27px] leading-[24px]">{b}</span>
            <span className="self-start pt-1 text-[10px] leading-none font-bold">{c}</span>
          </button>
        ))}
      </div>
    </div>
  );
}

function ChartOverlay() {
  return (
    <div className="absolute top-0 left-0 flex flex-col whitespace-pre text-black">
      <div className="relative flex h-[21px] items-center pb-px pl-1 text-[10px]">
        <span className="absolute top-[1px] left-0 text-[11px] leading-[13px] font-bold text-[#ff0000]">Label</span>
        <svg className="relative h-3 w-4" viewBox="0 0 16 12" aria-hidden="true">
          <path d="M1 1h14v10H1z" fill="#1c2430" />
          <path d="M8 1H1v10h7M3 4h4M3 6h4M3 8h4" stroke="#c84a40" fill="none" />
          <path d="M8 1h7v10H8M9 4h4M9 6h4M9 8h4" stroke="#2a6fd8" fill="none" />
        </svg>
        <svg className="relative ml-1.5 h-3 w-4" viewBox="0 0 16 12" aria-hidden="true">
          <path d="M1 4h6v7H1z" fill="#6a1a1a" /><path d="M9 5h6v6H9z" fill="#123a78" />
          <path d="M1 4V2h4M15 5V2h-5" stroke="#ff2020" fill="none" /><path d="M6 2h4v3" stroke="#888" fill="none" />
          <path d="M15 2v9h-4" stroke="#2a6fd8" fill="none" />
        </svg>
        <span className="ml-1">XAGUSD, M15:  Silver US Dollar</span>
      </div>
      <QuickTrade />
      <div className="mt-[2px] ml-[3px] text-[9px] leading-[11px]">
        <p>{"High= 75.334    Previous Days Range= 6.334000000000003"}</p>
        <p>{"Low= 69.0    Current Days Range= 23789.999999999905"}</p>
        <div className="grid h-[15px] leading-[11px] *:col-start-1 *:row-start-1">
          <p>Close= 75.115</p>
          <p className="pt-px pl-0.5">Sell 10 at 75.374</p>
          <p className="pt-1 pl-0.5">Sell 10 at 75.342</p>
          <p className="pt-1 pl-0.5">Sell 20 at 75.339</p>
        </div>
        <p className="-mt-1 leading-[11px]">Time for next bar: -16.0 min 3.0000000000000426 sec</p>
      </div>
    </div>
  );
}

const PRICE_TAGS: [string, number, string][] = [
  ["75.337", 376.5, "bg-[#26a69a] text-white"],
  ["75.225", 391.5, "bg-[#0000ff] text-white"],
  ["73.160", 671, "bg-[#ff00ff] text-black"],
  ["72.058", 819.5, "bg-[#0000ff] text-white"],
];

function PriceScale() {
  return (
    <div className="relative w-[47px] shrink-0 text-[9px] leading-[11px] text-black">
      {TICKS.filter((t) => t !== 73.16).map((t) => (
        <div key={t} className="absolute left-0 flex -translate-y-1/2 items-center" style={{ top: pctY(priceY(t)) }}>
          <span className="h-px w-[3px] bg-black" />
          <span className="ml-px">{t === 75.32 ? "" : t.toFixed(3)}</span>
        </div>
      ))}
      {PRICE_TAGS.map(([t, y, c]) => (
        <span key={t} className={`absolute left-0.5 w-[34px] -translate-y-1/2 pl-0.5 ${c}`} style={{ top: pctY(y) }}>
          {t}
        </span>
      ))}
    </div>
  );
}

type Cell = [text: string, width: string, color: string];
const STATS: Cell[][] = [
  [
    ["AUTHDDD:3000.00", "w-[152px]", "text-[#d98600]"], ["MAXACDD:6000.00", "w-[152px]", "text-[#0a9be0]"],
    ["ACDD:0.00 (0.0%)", "w-[152px]", "text-[#7fae2a]"], ["R:R: 1:0.00", "w-[95px]", "text-[#e0e0e0]"],
    ["G.R:R: 1:0.00", "w-[110px]", "text-[#e0e0e0]"],
  ],
  [
    ["XAGUSD:", "w-[95px]", "text-[#00dcdc]"], ["SL:-0.00", "w-[114px]", "text-[#e6e600]"],
    ["G.SL:-0.00", "w-[133px]", "text-[#e6e600]"], ["RE.PNL:5554.70", "w-[152px]", "text-[#00dc00]"],
    ["T LOSS:-22757.07", "w-[160px]", "text-[#e8e8e8]"],
  ],
  [
    ["TP:+0.00", "w-[95px]", "text-[#8fe02a]"], ["G.TP:+0.00", "w-[114px]", "text-[#8fe02a]"],
    ["ONG PNL:-1806.29", "w-[133px]", "text-[#d98600]"], ["BAL SL:206785.76", "w-[152px]", "text-[#e8e8d8]"],
    ["BAL TP:206785.76", "w-[160px]", "text-[#8fe02a]"],
  ],
];

const PANEL_BUTTON =
  "h-[19px] w-[85px] shrink-0 border-2 border-t-[#8fa0b4] border-r-[#5c6c7c] border-b-[#5c6c7c] border-l-[#8fa0b4] bg-[#708090] font-['Liberation_Sans',sans-serif] text-[11px] leading-[15px] text-white";

function ShieldPanel() {
  return (
    <div className={`flex h-[76px] shrink-0 border-t-3 border-l-3 border-[#5f5f5f] bg-black pt-px pl-2 text-[12px] leading-5 whitespace-pre ${MONO}`}>
      <div className="w-[661px] shrink-0">
        {STATS.map((row, i) => (
          <div key={i} className="flex">
            {row.map(([t, w, c]) => (
              <span key={t} className={`${w} shrink-0 ${c}`}>{t}</span>
            ))}
          </div>
        ))}
      </div>
      <span className="mt-[9px] h-2.5 w-2.5 shrink-0 rounded-full bg-[#ffa500]" />
      <div className="ml-[13px] w-[189px] shrink-0">
        <p className="text-[15px] leading-[22px] text-[#dcdcdc]">QUANTUM SHIELD</p>
        <p className="text-[10px] leading-[14px] text-[#8c8c8c]">LICENSE: #12345678</p>
        <p className="pt-1 text-[#d98600]">STATUS: WARNING (-3.0%)</p>
      </div>
      <div className="min-w-0 flex-1">
        <div className="flex h-5 items-center text-[10px]">
          <span className="w-[191px] text-[#e6e600]">THE GUARDIAN PROTOCOL</span>
          <span className="w-[240px] text-[#e8e8e8]">RISK for 10p: 20000.00$ (10.03%)</span>
          <button className={PANEL_BUTTON}>DEMO: OFF</button>
        </div>
        <p className="text-[#00dcdc]">
          <span className="text-[#e0f4f0]">TF: M15</span>
          {" | LOSS RATIO ON XAGUSD : 0/0 (0.0%) | T.GAIN: 21139.790"}
        </p>
        <div className="flex h-5 items-center text-[#e8e8e8]">
          <span className="min-w-[191px]">TO TARGET: Ong.(-133424.77)</span>
          <button className={PANEL_BUTTON}>EXPORT CSV</button>
          <span className="ml-[3px] text-[#a0a0a0]">Path: MQL5/Files/Quantum_Report.csv</span>
        </div>
      </div>
    </div>
  );
}

function ChartWindow() {
  return (
    <main className="ml-1 flex min-w-0 flex-1 flex-col">
      <div className="flex min-h-0 flex-1 flex-col bg-white pt-0.5 pl-0.5">
        <div className="flex min-h-0 flex-1">
          <div className="relative min-w-0 flex-1 overflow-hidden border border-black">
            <div className="absolute inset-0"><Plot /></div>
            <ChartOverlay />
            <div className="font-['Liberation_Sans',sans-serif] text-[11px] leading-none whitespace-pre">
              <span className="absolute -translate-y-1/2 text-[#3030e8]" style={{ left: pctX(1575), top: pctY(397) }}>M3</span>
              <span className="absolute -translate-y-1/2 text-[#f012f0]" style={{ left: pctX(1572), top: pctY(677) }}>{"Pivot  70.148"}</span>
              <span className="absolute -translate-y-1/2 text-[#3030e8]" style={{ left: pctX(1575), top: pctY(825) }}>M2</span>
            </div>
            <svg className="absolute top-[267px] left-[156px] h-[19px] w-3" viewBox="0 0 12 19" aria-hidden="true">
              <path d="M1 1v14l3.500-3 2.500 6 2.500-1-2.500-6H11z" fill="#111" stroke="#ddd" strokeWidth=".8" />
            </svg>
          </div>
          <PriceScale />
        </div>
        <div className="mt-px mr-[47px] border-t border-black"><ShieldPanel /></div>
        <div className="relative mr-[47px] h-5 overflow-visible text-[9px] leading-[10px] text-black">
          {TIMES.map((t, i) => (
            <span key={t} className="absolute top-0 whitespace-nowrap" style={{ left: `${((i * 64) / 1517) * 100}%` }}>
              <span className="block h-[3px] w-px bg-black" />
              <span className="block">{t}</span>
            </span>
          ))}
        </div>
      </div>
      <div className="flex h-[19px] shrink-0 items-start border-t border-[#a0a0a0] bg-[#2f2f2f] text-[#d4d4d4]">
        <button className="w-[93px] pt-px pr-1 text-center">EURJPY+,M1</button>
        <button className="-mt-px h-[17px] w-[83px] border border-t-0 border-[#a0a0a0] bg-[#202020] leading-[14px]">XAGUSD,M15</button>
        <button className="w-[88px] pt-px text-center">EURJPY+,M1</button>
        <span className="ml-auto flex gap-4 self-center pr-3">
          <button aria-label="Onglet précédent"><svg className="h-[5px] w-[3px]" viewBox="0 0 3 5" aria-hidden="true"><path d="M3 0v5L0 2.500z" fill="#666" /></svg></button>
          <button aria-label="Onglet suivant"><svg className="h-[5px] w-[3px]" viewBox="0 0 3 5" aria-hidden="true"><path d="M0 0v5l3-2.500z" fill="#666" /></svg></button>
        </span>
      </div>
    </main>
  );
}

const STATUS: [string, string][] = [
  ["Euro", "w-[136px]"], ["2026.03.31 11:45", "w-[98px]"], ["O: 73.008", "w-[70px]"], ["H: 73.259", "w-[70px]"],
  ["L: 73.008", "w-[68px]"], ["C: 73.080", "w-[68px]"], ["", "w-[67px]"],
];

function StatusBar() {
  return (
    <footer className="flex h-[17px] shrink-0 items-stretch overflow-hidden border-t border-[#a0a0a0] bg-[#2f2f2f] leading-[14px] text-[#c8c8c8]">
      <span className="min-w-0 flex-1 pt-1 pl-0.5">Pour l'Aide, appuyer sur F1</span>
      {STATUS.map(([t, w], i) => (
        <span key={i} className={`mt-px shrink-0 border-l border-[#666] pt-[3px] pl-[5px] whitespace-nowrap ${w}`}>{t}</span>
      ))}
      <span className="mt-px flex w-[119px] shrink-0 items-start gap-[6px] border-l border-[#666] pt-[3px] pl-1 whitespace-nowrap">
        <svg className="h-2.5 w-3.5" viewBox="0 0 14 10" aria-hidden="true">
          <path d="M.5 8v2M3 7v3M5.500 5.500V10M8 4v6M10.500 2v8M13 0v10" stroke={GREEN} strokeWidth="1.200" />
        </svg>
        95.20 ms
      </span>
    </footer>
  );
}

export default function App() {
  return (
    <div className={`flex h-screen w-full flex-col overflow-hidden bg-[#2f2f2f] text-[11px] leading-[14px] ${UI}`}>
      <TopBars />
      <Toolbar />
      <Toolbox />
      <div className="flex min-h-0 flex-1">
        <MarketWatch />
        <ChartWindow />
      </div>
      <StatusBar />
    </div>
  );
}
